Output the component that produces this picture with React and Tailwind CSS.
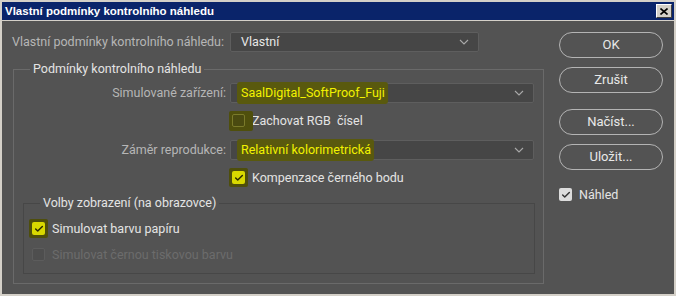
import { Check } from "lucide-react";

function Chevron() {
    return (
        <svg width="10" height="6" viewBox="0 0 10 6" className="shrink-0">
            <path d="M1 1 L5 5 L9 1" fill="none" stroke="#a9a9a9" strokeWidth="1.1" />
        </svg>
    );
}

function Select({ value, width, hl }) {
    return (
        <div className={`flex items-center justify-between h-[20px] ${width} bg-[#464646] border border-[#5e5e5e] rounded-[2px] pl-[10px] pr-[9px]`}>
            {hl ? (
                <span className="relative text-[#f2f200]">
                    <span className="absolute -left-[4px] -right-[3px] -top-[3px] -bottom-[3px] bg-[#59590e] rounded-[3px]"></span>
                    <span className="relative">{value}</span>
                </span>
            ) : (
                <span className="text-[#e6e6e6]">{value}</span>
            )}
            <Chevron />
        </div>
    );
}

function Box({ checked, disabled, hl }) {
    if (hl && checked) {
        return (
            <span className="relative w-[13px] h-[13px] shrink-0">
                <span className="absolute -inset-[3px] bg-[#4e4e0b] rounded-[2px]"></span>
                <span className="relative flex items-center justify-center w-[13px] h-[13px] rounded-[2px] bg-[#d8d800]">
                    <Check size={10} strokeWidth={3.5} color="#2a2a00" />
                </span>
            </span>
        );
    }
    if (hl) {
        return (
            <span className="relative w-[13px] h-[13px] shrink-0">
                <span className="absolute -left-[3px] -right-[8px] -top-[3px] -bottom-[4px] bg-[#4f4f0c] rounded-[2px]"></span>
                <span className="relative block w-[13px] h-[13px] rounded-[2px] border border-[#7a7a2a] bg-[#4a4a10]"></span>
            </span>
        );
    }
    if (checked) {
        return (
            <span className="flex items-center justify-center w-[13px] h-[13px] shrink-0 rounded-[2px] bg-[#dcdcdc]">
                <Check size={10} strokeWidth={3.5} color="#333333" />
            </span>
        );
    }
    return (
        <span className={`block w-[13px] h-[13px] shrink-0 rounded-[2px] border ${disabled ? "border-[#5c5c5c] bg-[#4e4e4e]" : "border-[#8a8a8a]"}`}></span>
    );
}

function CheckRow({ label, checked, disabled, hl, className }) {
    return (
        <div className={`flex items-center h-[13px] gap-[7px] ${className}`}>
            <Box checked={checked} disabled={disabled} hl={hl} />
            <span className={`whitespace-pre ${disabled ? "text-[#6c6c6c]" : "text-[#e4e4e4]"}`}>{label}</span>
        </div>
    );
}

function Button({ children, className }) {
    return (
        <div className={`flex items-center justify-center w-[104px] h-[26px] rounded-full border border-[#b4b4b4] text-[#e8e8e8] text-[13px] ${className}`}>
            {children}
        </div>
    );
}

export default function App() {
    return (
        <div className="w-[676px] h-[296px] bg-[#535353] border-2 border-[#d4d0c8] overflow-hidden text-[12.5px] leading-[16px]" style={{ fontFamily: "Roboto, 'Open Sans', sans-serif" }}>
            {/* title bar */}
            <div className="flex items-center justify-between h-[19px] bg-[#0a246a] border-b border-[#d4d0c8] pl-[3px] pr-[2px]">
                <span className="text-white font-bold text-[11.5px]" style={{ fontFamily: "'Liberation Sans', Arial, sans-serif" }}>
                    Vlastní podmínky kontrolního náhledu
                </span>
                <div className="flex items-center justify-center w-[16px] h-[14px] bg-[#d4d0c8] border border-t-white border-l-white border-r-[#404040] border-b-[#404040]">
                    <svg width="8" height="7" viewBox="0 0 8 7">
                        <path d="M0.5 0.5 L7.5 6.5 M7.5 0.5 L0.5 6.5" stroke="#000" strokeWidth="1.6" />
                    </svg>
                </div>
            </div>

            <div className="flex">
                {/* left column */}
                <div className="w-[547px]">
                    <div className="flex items-center mt-[11px]">
                        <div className="w-[228px] pl-[10px] text-[#b6b6b6]">Vlastní podmínky kontrolního náhledu:</div>
                        <Select value="Vlastní" width="w-[249px]" />
                    </div>

                    <fieldset className="ml-[11px] mt-[9px] w-[531px] border border-[#6a6a6a] pb-[9px]">
                        <legend className="ml-[16px] px-[3px] text-[#e4e4e4]">Podmínky kontrolního náhledu</legend>

                        <div className="flex items-center mt-[6px]">
                            <div className="w-[216px] pr-[4px] text-right text-[#b6b6b6]">Simulované zařízení:</div>
                            <Select value="SaalDigital_SoftProof_Fuji" width="w-[304px]" hl />
                        </div>

                        <CheckRow className="ml-[218px] mt-[11px]" label="Zachovat RGB  čísel" hl />

                        <div className="flex items-center mt-[13px]">
                            <div className="w-[216px] pr-[4px] text-right text-[#b6b6b6]">Záměr reprodukce:</div>
                            <Select value="Relativní kolorimetrická" width="w-[304px]" hl />
                        </div>

                        <CheckRow className="ml-[218px] mt-[11px]" label="Kompenzace černého bodu" checked hl />

                        <fieldset className="ml-[9px] mt-[11px] w-[512px] border border-[#474747] pb-[12px]">
                            <legend className="ml-[16px] px-[3px] text-[#e4e4e4]">Volby zobrazení (na obrazovce)</legend>
                            <CheckRow className="ml-[8px] mt-[11px]" label="Simulovat barvu papíru" checked hl />
                            <CheckRow className="ml-[8px] mt-[13px]" label="Simulovat černou tiskovou barvu" disabled />
                        </fieldset>
                    </fieldset>
                </div>

                {/* right column */}
                <div className="ml-[10px] mt-[11px] flex flex-col">
                    <Button>OK</Button>
                    <Button className="mt-[9px]">Zrušit</Button>
                    <Button className="mt-[16px]">Načíst...</Button>
                    <Button className="mt-[9px]">Uložit...</Button>
                    <CheckRow className="mt-[18px]" label="Náhled" checked />
                </div>
            </div>
        </div>
    );
}
